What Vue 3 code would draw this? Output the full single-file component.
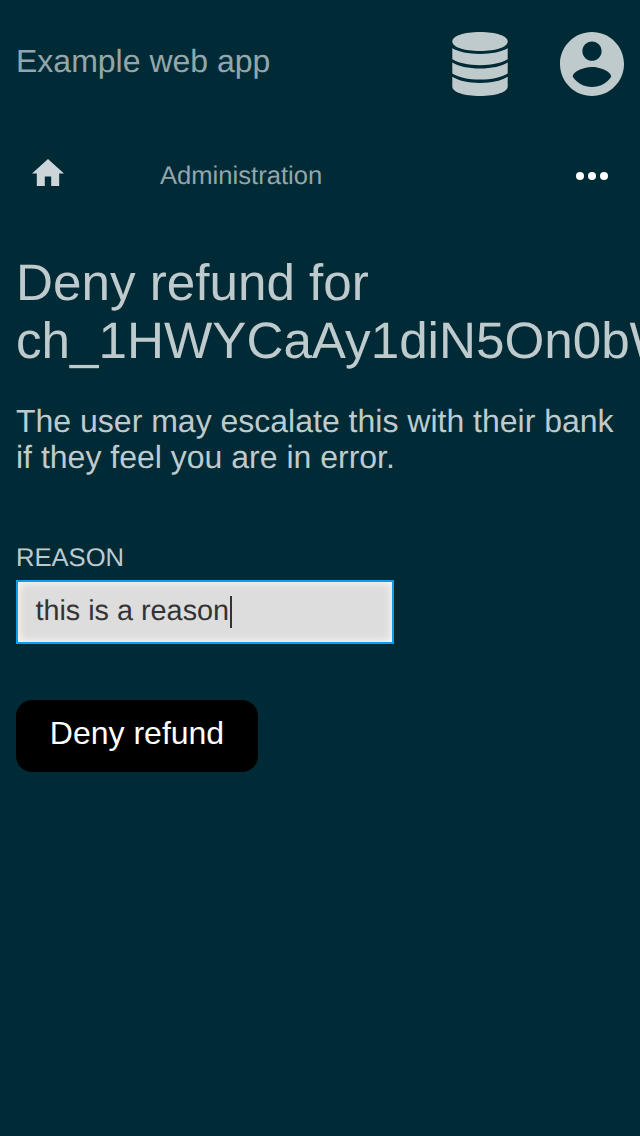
<script setup>
import { ref } from 'vue'

const reason = ref('this is a reason')
</script>

<template>
  <div class="page">
    <header class="header">
      <span class="brand">Example web app</span>
      <div class="actions">
        <svg class="database" viewBox="0 0 56 64" aria-hidden="true">
          <path d="M.3 9.500C.3 4 12 0 28 0s27.700 4 27.700 9.500S44 19 28 19 .3 15 .3 9.500z" />
          <path d="M.3 16.300C6 19.800 16.500 22 28 22s22-2.200 27.700-5.700V27.300C50 30.900 39.500 33.200 28 33.200S6 30.900 .3 27.300z" />
          <path d="M.3 30.400C6 34.200 16.500 36.400 28 36.400s22-2.200 27.700-6V41.400C50 45.200 39.500 47.500 28 47.500S6 45.200 .3 41.400z" />
          <path d="M.3 44.800C6 48.600 16.500 51 28 51s22-2.400 27.700-6.200V54.500C55.700 60 44 64 28 64S.3 60 .3 54.500z" />
        </svg>
        <svg class="account" viewBox="2 2 20 20" aria-hidden="true">
          <path d="M12 2C6.480 2 2 6.480 2 12s4.480 10 10 10 10-4.480 10-10S17.520 2 12 2zm0 3c1.660 0 3 1.340 3 3s-1.340 3-3 3-3-1.340-3-3 1.340-3 3-3zm0 14.200c-2.500 0-4.710-1.280-6-3.220.03-1.990 4-3.080 6-3.080 1.990 0 5.970 1.090 6 3.080-1.290 1.940-3.500 3.220-6 3.220z" />
        </svg>
      </div>
    </header>

    <nav class="nav">
      <svg class="home" viewBox="2 3 20 17" aria-hidden="true">
        <path d="M10 20v-6h4v6h5v-8h3L12 3 2 12h3v8z" />
      </svg>
      <span class="crumb">Administration</span>
      <svg class="more" viewBox="0 0 32 8" aria-hidden="true">
        <circle cx="4" cy="4" r="4" />
        <circle cx="16" cy="4" r="4" />
        <circle cx="28" cy="4" r="4" />
      </svg>
    </nav>

    <main class="content">
      <h1 class="title">Deny refund for ch_1HWYCaAy1diN5On0bW</h1>
      <p class="intro">The user may escalate this with their bank if they feel you are in error.</p>
      <div class="label">REASON</div>
      <div class="field">
        <span class="value">{{ reason }}</span><i class="caret"></i>
      </div>
      <button class="submit" type="button">Deny refund</button>
    </main>
  </div>
</template>

<style>
html,
body {
  background: #002b36;
  overflow: hidden;
}
</style>

<style scoped>
.page {
  box-sizing: border-box;
  width: 640px;
  height: 1136px;
  overflow: hidden;
  background: #002b36;
  color: #bfcacd;
  font-family: "Liberation Sans", Arial, sans-serif;
  font-size: 32px;
  text-rendering: geometricPrecision;
}

svg {
  display: block;
  fill: currentColor;
}

.header {
  display: flex;
  justify-content: space-between;
  height: 128px;
  padding: 0 16px;
}

.brand {
  padding-top: 43px;
  line-height: 36px;
  color: #94a6ab;
}

.actions {
  display: flex;
  gap: 52px;
  padding-top: 32px;
}

.database {
  width: 56px;
  height: 64px;
}

.account {
  width: 64px;
  height: 64px;
}

.nav {
  display: flex;
  align-items: flex-start;
  height: 96px;
  padding: 0 32px;
}

.home {
  width: 32px;
  height: 27.200px;
  margin-top: 30.600px;
  color: #ccd5d7;
}

.crumb {
  margin: 33px 0 0 96px;
  font-size: 25.600px;
  line-height: 30px;
  color: #94a6ab;
}

.more {
  width: 32px;
  height: 8px;
  margin: 44px 0 0 auto;
  color: #fff;
}

.content {
  padding: 30px 16px 0;
}

.title {
  margin: 0;
  font-size: 51.200px;
  font-weight: 400;
  line-height: 58px;
}

.intro {
  margin: 33px 0 0;
  line-height: 36px;
}

.label {
  margin-top: 68px;
  font-size: 25.600px;
  line-height: 30px;
}

.field {
  display: flex;
  align-items: flex-start;
  box-sizing: border-box;
  width: 378px;
  height: 64px;
  margin-top: 7px;
  padding: 13px 17.400px 0;
  border: 2px solid #109ceb;
  background: #ddd;
  box-shadow: inset 0 0 10px #fff;
  color: #333;
  font-size: 28.800px;
  line-height: 32px;
}

.value {
  width: 194.600px;
  white-space: nowrap;
}

.caret {
  width: 2px;
  height: 32px;
  margin-top: 1px;
  background: #333;
}

.submit {
  display: block;
  width: 242px;
  height: 72px;
  margin-top: 56px;
  padding: 0 0 6px;
  border: 0;
  border-radius: 16px;
  background: #000;
  color: #fff;
  font: inherit;
}
</style>
